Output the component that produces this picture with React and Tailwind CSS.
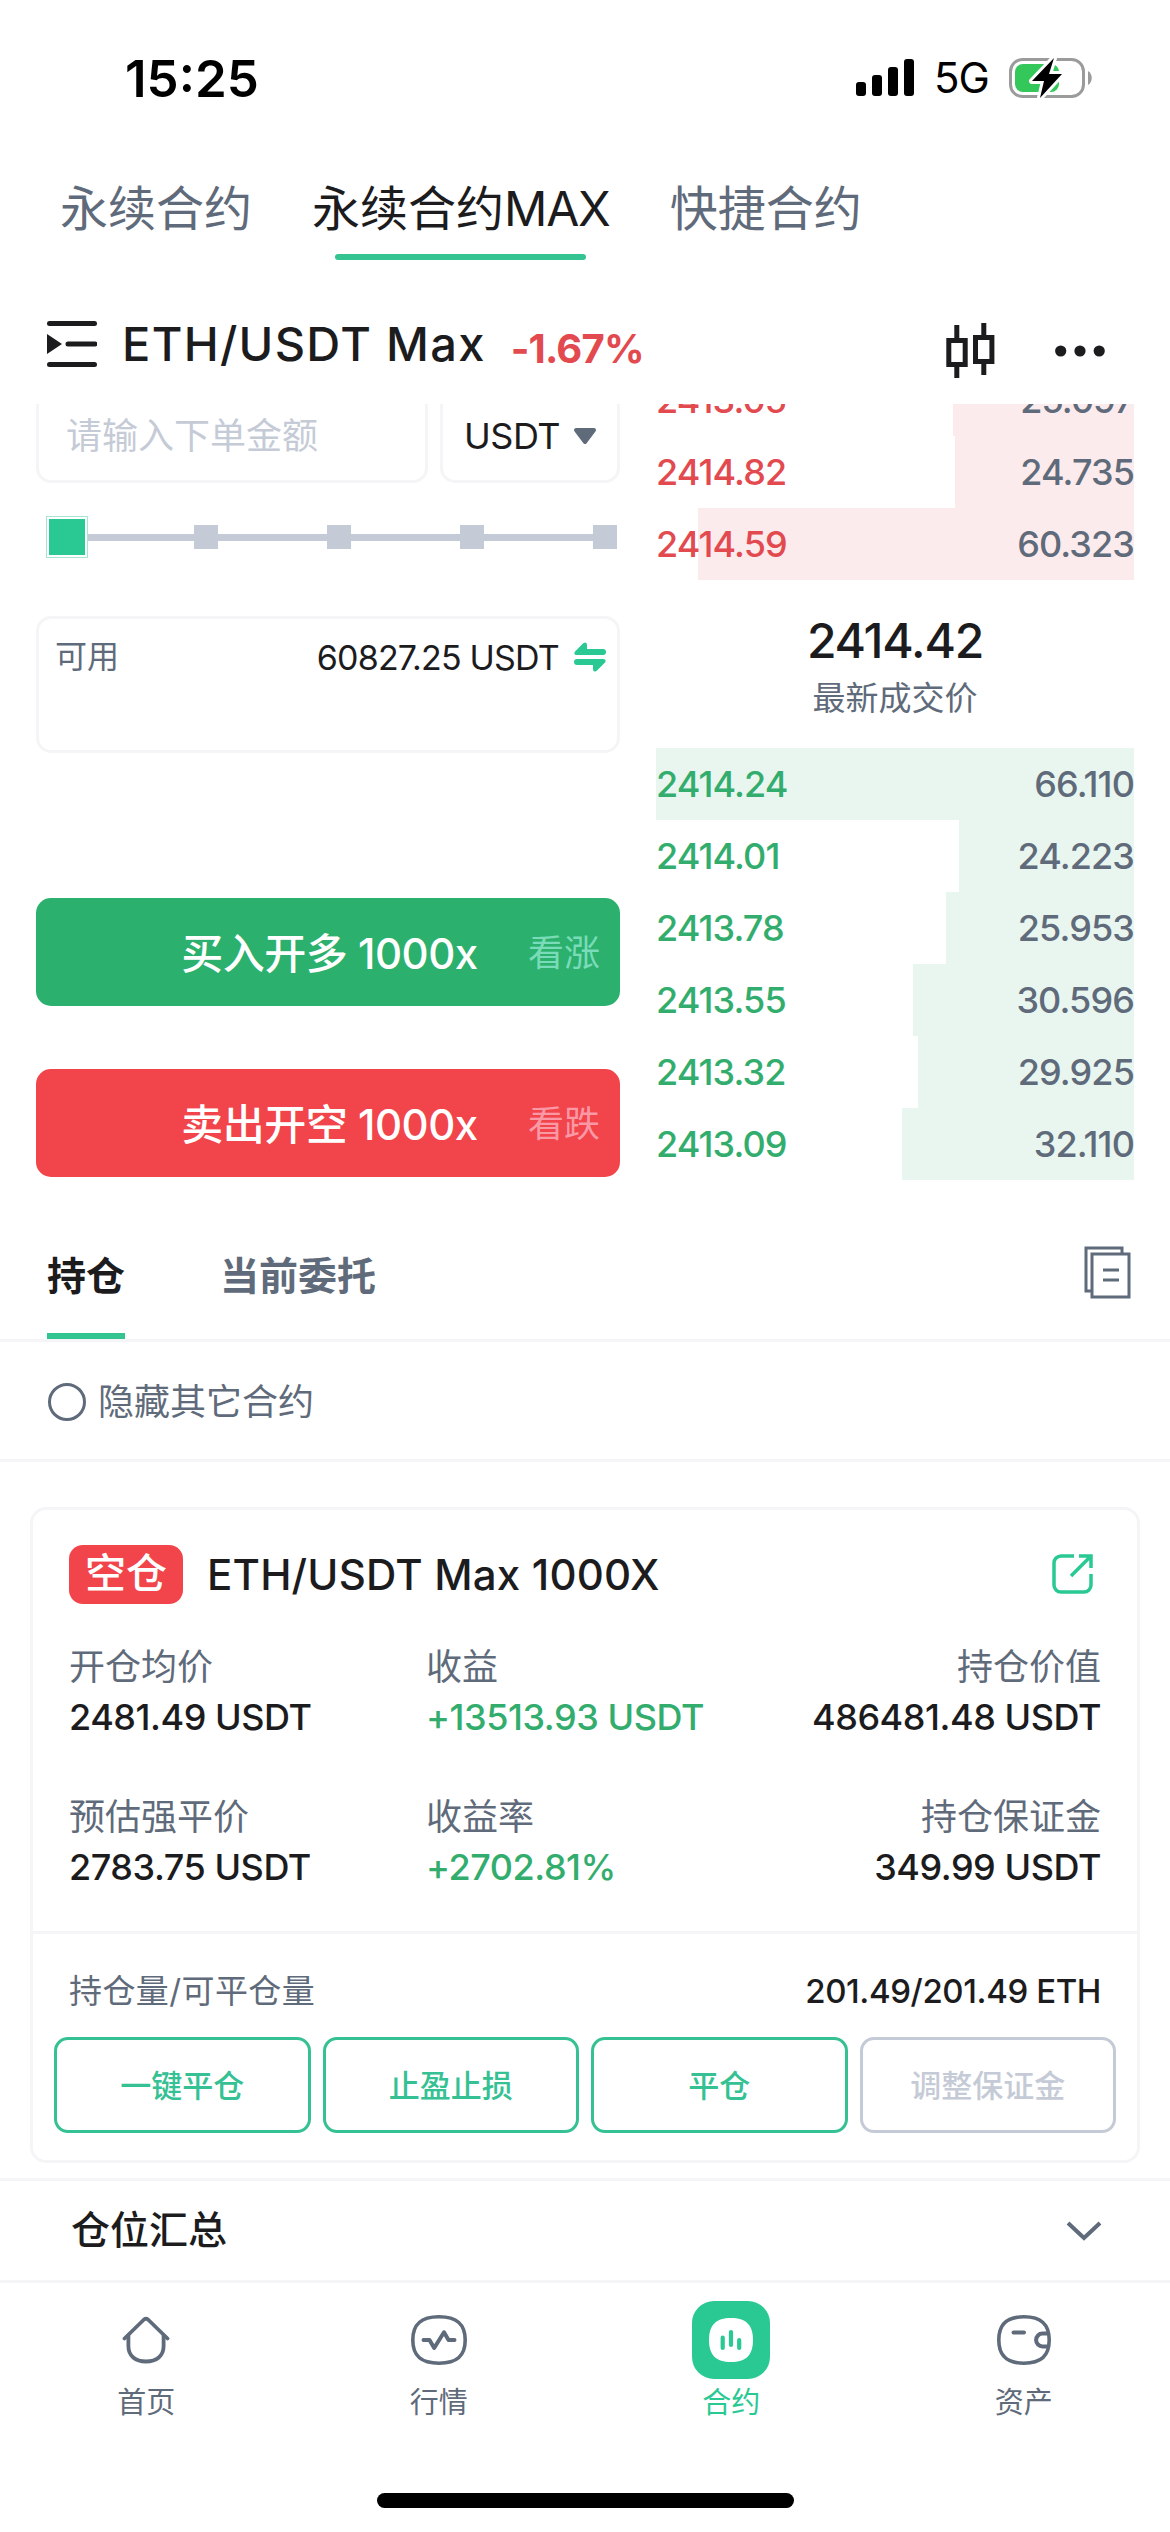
const asks = [
    { price: '2413.05', amount: '25.097', depth: 181 },
    { price: '2414.82', amount: '24.735', depth: 179 },
    { price: '2414.59', amount: '60.323', depth: 436 },
];

const bids = [
    { price: '2414.24', amount: '66.110', depth: 478 },
    { price: '2414.01', amount: '24.223', depth: 175 },
    { price: '2413.78', amount: '25.953', depth: 188 },
    { price: '2413.55', amount: '30.596', depth: 221 },
    { price: '2413.32', amount: '29.925', depth: 216 },
    { price: '2413.09', amount: '32.110', depth: 232 },
];

const stats = [
    { label: '开仓均价', value: '2481.49 USDT' },
    { label: '收益', value: '+13513.93 USDT', up: true },
    { label: '持仓价值', value: '486481.48 USDT', right: true },
    { label: '预估强平价', value: '2783.75 USDT' },
    { label: '收益率', value: '+2702.81%', up: true },
    { label: '持仓保证金', value: '349.99 USDT', right: true },
];

function StatusBar() {
    return (
        <div className="flex h-[156px] items-center justify-between pl-[125px] pr-[78px]">
            <span className="text-[51px] font-semibold leading-none text-black">15:25</span>
            <div className="flex items-center">
                <svg width="59" height="38" viewBox="0 0 59 38">
                    <rect x="0" y="23" width="10" height="14" rx="3" />
                    <rect x="16" y="16" width="10" height="21" rx="3" />
                    <rect x="32" y="8" width="10" height="29" rx="3" />
                    <rect x="48" y="0" width="10" height="37" rx="3" />
                </svg>
                <span className="ml-[19px] w-[56px] text-[42px] leading-none tracking-[-1px] text-black">5G</span>
                <svg className="ml-[19px]" width="83" height="44" viewBox="0 0 83 44">
                    <rect x="1.5" y="3.5" width="73" height="37" rx="12" fill="none" stroke="#9b9b9b" strokeWidth="3" />
                    <path d="M79 15c5 3 5 11 0 14z" fill="#9b9b9b" />
                    <rect x="6" y="8" width="44" height="28" rx="8" fill="#34c759" />
                    <path d="M45 2L23 25h12l-4 17 22-24H40z" fill="#000" stroke="#fff" strokeWidth="6" paintOrder="stroke" strokeLinejoin="round" />
                </svg>
            </div>
        </div>
    );
}

function BookRow({ row, side }) {
    const ask = side === 'ask';
    return (
        <div className="relative flex h-[72px] shrink-0 items-center justify-between text-[36px] font-medium tracking-[-0.9px]">
            <div
                className={`absolute inset-y-0 right-0 ${ask ? 'bg-[#fcebed]' : 'bg-[#e9f6f0]'}`}
                style={{ width: row.depth }}
            />
            <span className={`relative ${ask ? 'text-[#e24a50]' : 'text-[#33ad6e]'}`}>{row.price}</span>
            <span className="relative text-[#5f6b7a]">{row.amount}</span>
        </div>
    );
}

function OrderForm() {
    return (
        <div className="w-[584px]">
            <div className="flex gap-3">
                <div className="flex h-[79px] w-[392px] items-center rounded-b-[15px] border-x-3 border-b-3 border-[#f5f5f7] pl-[27px] pb-[12px] text-[36px] text-[#c5cbd6]">
                    请输入下单金额
                </div>
                <div className="flex h-[79px] flex-1 items-center rounded-b-[15px] border-x-3 border-b-3 border-[#f5f5f7] pl-[21px] pb-[12px] text-[36px] text-[#1c1c1e]">
                    <span className="w-[109px] tracking-[-0.5px]">USDT</span>
                    <svg width="24" height="18" viewBox="0 0 24 18">
                        <path d="M3 3h18l-9 12z" fill="#5f6b7a" stroke="#5f6b7a" strokeWidth="4" strokeLinejoin="round" />
                    </svg>
                </div>
            </div>

            {/* Amount slider */}
            <div className="mt-[33px] flex h-[42px] items-center pl-[10px]">
                <div className="size-[42px] border border-[#a5e6cd] bg-white p-[2px]">
                    <div className="size-full bg-[#2ac993]" />
                </div>
                {[106, 109, 109, 109].map((w, i) => (
                    <div key={i} className="flex items-center">
                        <div className="h-[7px] bg-[#c5cbd6]" style={{ width: w }} />
                        <div className="size-6 bg-[#c5cbd6]" />
                    </div>
                ))}
            </div>

            <div className="mt-[58px] h-[137px] rounded-[15px] border-3 border-[#f5f5f7] px-[16px] pt-[14px]">
                <div className="flex h-[48px] items-center">
                    <span className="text-[32px] text-[#5f6b7a]">可用</span>
                    <span className="ml-auto text-[34px] tracking-[-0.8px] text-[#1c1c1e]">60827.25 USDT</span>
                    <svg className="ml-[15px] mr-[-5px]" width="32" height="30" viewBox="0 0 32 30" fill="#2ac993">
                        <path d="M1 9.500L9.500 1Q13-.8 13 3v4h16q3 0 3 3t-3 3H3Q-1 13 1 9.500z" />
                        <path d="M31 20.500L22.500 29Q19 30.800 19 27v-4H3q-3 0-3-3t3-3h26q4 0 2 3.500z" />
                    </svg>
                </div>
            </div>

            <TradeButton className="mt-[145px] bg-[#2bb06d]" label="买入开多 1000x" hint="看涨" hintClass="text-[#7adbb8]" />
            <TradeButton className="mt-[63px] bg-[#f1444b]" label="卖出开空 1000x" hint="看跌" hintClass="text-[#fb98a5]" />
        </div>
    );
}

function TradeButton({ className, label, hint, hintClass }) {
    return (
        <div className={`relative flex h-[108px] items-center justify-center rounded-[15px] pt-[2px] ${className}`}>
            <span className="pl-[3px] text-[42px] font-medium tracking-[-0.5px] text-white">{label}</span>
            <span className={`absolute right-[20px] text-[36px] ${hintClass}`}>{hint}</span>
        </div>
    );
}

function OrderBook() {
    return (
        <div className="w-[478px]">
            {/* the first ask is scrolled half out of view */}
            <div className="flex h-[176px] flex-col justify-end overflow-hidden">
                {asks.map((row) => <BookRow key={row.price} row={row} side="ask" />)}
            </div>
            <div className="flex h-[168px] flex-col items-center pt-[33px]">
                <span className="text-[48px] font-medium leading-[56px] tracking-[-1.2px] text-[#1c1c1e]">2414.42</span>
                <span className="mt-[5px] text-[33px] leading-[48px] text-[#5f6b7a]">最新成交价</span>
            </div>
            {bids.map((row) => <BookRow key={row.price} row={row} side="bid" />)}
        </div>
    );
}

function PositionCard() {
    return (
        <div className="mx-[30px] mt-[45px] h-[656px] rounded-[16px] border-3 border-[#f5f5f7]">
            <div className="flex h-[131px] items-center pb-[3px] pl-[36px] pr-[43px]">
                <span className="flex h-[59px] w-[114px] items-center justify-center rounded-[14px] bg-[#f1444b] text-[41px] font-medium text-white">
                    空仓
                </span>
                <span className="ml-[24px] text-[42px] font-medium tracking-[0.2px] text-[#1c1c1e]">ETH/USDT Max 1000X</span>
                <svg className="ml-auto" width="42" height="42" viewBox="0 0 42 42" fill="none" stroke="#2ac993" strokeWidth="3.500">
                    <path d="M22 3H9a7 7 0 00-7 7v22a7 7 0 007 7h23a7 7 0 007-7V21" />
                    <path d="M27 3h12v12M39 3L19 23" />
                </svg>
            </div>
            <div className="grid h-[290px] grid-cols-[357px_1fr_auto] content-start gap-y-[50px] pl-[36px] pr-[36px]">
                {stats.map((s) => (
                    <div key={s.label} className={`flex h-[100px] flex-col ${s.right ? 'items-end' : ''}`}>
                        <span className="pt-px text-[36px] leading-[51px] text-[#5f6b7a]">{s.label}</span>
                        <span className={`text-[36px] font-medium leading-[48px] tracking-[-0.45px] ${s.up ? 'text-[#33ad6e]' : 'text-[#1c1c1e]'}`}>
                            {s.value}
                        </span>
                    </div>
                ))}
            </div>
            <div className="border-t-3 border-[#f5f5f7] px-[21px]">
                <div className="flex h-[103px] items-center justify-between px-[15px] pt-[13px]">
                    <span className="text-[33px] tracking-[0.4px] text-[#5f6b7a]">持仓量/可平仓量</span>
                    <span className="text-[33px] font-medium tracking-[-0.4px] text-[#1c1c1e]">201.49/201.49 ETH</span>
                </div>
                <div className="grid grid-cols-4 gap-3 text-[31px] font-medium">
                    {['一键平仓', '止盈止损', '平仓'].map((label) => (
                        <div key={label} className="flex h-[96px] items-center justify-center rounded-[14px] border-3 border-[#35c193] pt-[2px] text-[#35c193]">
                            {label}
                        </div>
                    ))}
                    <div className="flex h-[96px] items-center justify-center rounded-[14px] border-3 border-[#c5cbd6] pt-[2px] text-[#c5cbd6]">
                        调整保证金
                    </div>
                </div>
            </div>
        </div>
    );
}

function NavItem({ label, active, children }) {
    return (
        <div className="flex flex-1 flex-col items-center">
            <div className={`flex size-[78px] items-center justify-center rounded-[22px] ${active ? 'bg-[#2ac993]' : ''}`}>
                {children}
            </div>
            <span className={`mt-[3px] text-[29px] leading-[42px] ${active ? 'text-[#2ac993]' : 'text-[#5f6b7a]'}`}>{label}</span>
        </div>
    );
}

export default function App() {
    return (
        <div className="flex h-[2532px] w-[1170px] flex-col overflow-hidden bg-white font-['Inter','Noto_Sans_CJK_SC',sans-serif]">
            <StatusBar />

            <div className="flex h-[104px] gap-[60px] pl-[60px] text-[48px] leading-[106px] text-[#5f6b7a]">
                <span>永续合约</span>
                <div className="relative text-[#1c1c1e]">
                    永续合约<span className="tracking-[-1.2px]">MAX</span>
                    <div className="absolute bottom-0 left-[23px] h-[6px] w-[251px] rounded-full bg-[#33c491]" />
                </div>
                <span>快捷合约</span>
            </div>

            <div className="flex h-[144px] items-center pl-[47px] pr-[65px] pb-[6px] pt-[30px] text-[#1c1c1e]">
                <svg width="50" height="48" viewBox="0 0 50 48" stroke="#1c1c1e" strokeWidth="5" strokeLinecap="round">
                    <path d="M2.500 3.500h45M21 24h27M2.500 44.500h45" />
                    <path d="M0 14v20l15-10z" fill="#1c1c1e" stroke="none" />
                </svg>
                <span className="ml-[25px] text-[47px] font-medium tracking-[1.3px]">ETH/USDT Max</span>
                <span className="ml-[25px] pt-[9px] text-[40px] font-bold tracking-[-0.8px] text-[#e24a50]">-1.67%</span>
                <svg className="ml-auto mt-[14px]" width="50" height="56" viewBox="0 0 50 56" fill="none" stroke="#1c1c1e" strokeWidth="5">
                    <path d="M2.800 17.500h16.400v24H2.800zM10.800 2v14M10.800 43v12" />
                    <path d="M29.500 14.500h16.400v24H29.500zM37.800 0v13M37.800 40v12" />
                </svg>
                <svg className="ml-[59px] mt-[14px]" width="50" height="12" viewBox="0 0 50 12" fill="#1c1c1e">
                    <circle cx="5.700" cy="6" r="5.600" />
                    <circle cx="25" cy="6" r="5.600" />
                    <circle cx="44.200" cy="6" r="5.600" />
                </svg>
            </div>

            <div className="flex h-[776px] justify-between px-[36px]">
                <OrderForm />
                <OrderBook />
            </div>

            <div className="flex h-[162px] items-end border-b-3 border-[#f5f5f7] pl-[47px] pr-[39px] text-[39px] font-bold">
                <div className="flex h-[124px] items-center border-b-6 border-[#33c491] pt-[5px] text-[#1c1c1e]">持仓</div>
                <div className="ml-[95px] flex h-[124px] items-center pb-px text-[#5f6b7a]">当前委托</div>
                <svg className="mb-[40px] ml-auto" width="47" height="53" viewBox="0 0 47 53" fill="none" stroke="#5f6b7a" strokeWidth="3">
                    <path d="M8 45H2V2h36v6" />
                    <path d="M8 8h37v43H8zM19 24h16M19 34h16" />
                </svg>
            </div>
            <div className="flex h-[120px] items-center border-b-3 border-[#f5f5f7] pl-[48px] pt-[3px] text-[36px] text-[#5f6b7a]">
                <div className="mr-[12px] size-[38px] rounded-full border-3 border-[#5f6b7a]" />
                隐藏其它合约
            </div>

            <PositionCard />

            <div className="mt-[15px] flex h-[105px] items-center justify-between border-y-3 border-[#f5f5f7] pl-[71px] pr-[68px] text-[39px] font-medium text-[#1c1c1e]">
                仓位汇总
                <svg width="36" height="20" viewBox="0 0 36 20" fill="none" stroke="#5f6b7a" strokeWidth="4">
                    <path d="M2 2l16 15L34 2" />
                </svg>
            </div>

            <div className="flex h-[210px] pt-[18px]">
                <NavItem label="首页">
                    <svg width="48" height="50" viewBox="0 0 48 50" fill="none" stroke="#5f6b7a" strokeWidth="3.800" strokeLinecap="round" strokeLinejoin="round">
                        <path d="M2.500 23.500L22 4.500q2-1.500 4 0l19.500 19" />
                        <path d="M6.400 20.500V31c0 10 7 15.500 17.600 15.500S41.600 41 41.600 31V20.500" />
                    </svg>
                </NavItem>
                <NavItem label="行情">
                    <svg width="56" height="50" viewBox="0 0 56 50" fill="none" stroke="#5f6b7a" strokeWidth="3.600" strokeLinecap="round" strokeLinejoin="round">
                        <path d="M28 1.800C46 1.800 54.200 9 54.200 25S46 48.200 28 48.200 1.800 41 1.800 25 10 1.800 28 1.800z" />
                        <path d="M12.500 25h6l4.700 8L33 17.300l4.500 7.700h6" strokeWidth="4" />
                    </svg>
                </NavItem>
                <NavItem label="合约" active>
                    <svg width="44" height="44" viewBox="0 0 44 44">
                        <path d="M22 0c15 0 22 7 22 22s-7 22-22 22S0 37 0 22 7 0 22 0z" fill="#fff" />
                        <path d="M13.700 19.500V30M22 14v13M30.200 22v8" stroke="#2ac993" strokeWidth="4.200" strokeLinecap="round" />
                    </svg>
                </NavItem>
                <NavItem label="资产">
                    <svg width="54" height="50" viewBox="0 0 54 50" fill="none" stroke="#5f6b7a" strokeWidth="3.600" strokeLinecap="round">
                        <path d="M27 1.800C44 1.800 52.200 9 52.200 25S44 48.200 27 48.200 1.800 41 1.800 25 10 1.800 27 1.800z" />
                        <path d="M16.500 17.500h10.500M51 18.600h-5.500a6.400 6.400 0 000 12.800H51" strokeWidth="4" />
                    </svg>
                </NavItem>
            </div>
            <div className="mx-auto h-[15px] w-[417px] rounded-full bg-black" />
        </div>
    );
}
